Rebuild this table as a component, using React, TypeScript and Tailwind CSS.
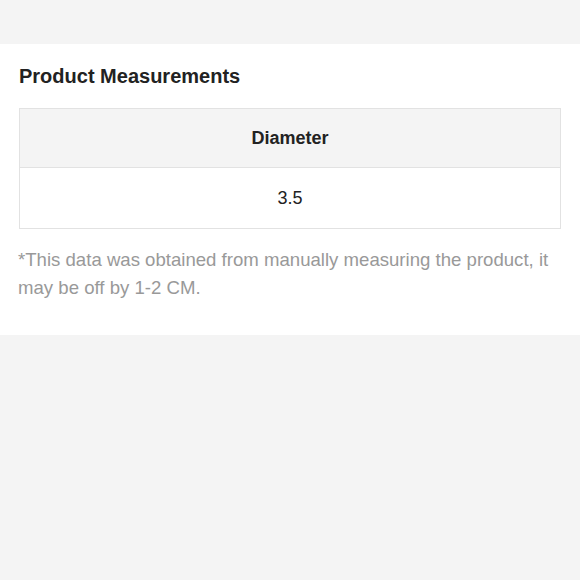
export default function App() {
  return (
    <div className="min-h-[580px] bg-[#f4f4f4] pt-[44px] font-['Liberation_Sans',Arial,sans-serif]">
      <section className="bg-white px-[19px] pt-[21px] pb-[33px]">
        <h2 className="text-[20px] leading-[22px] font-bold text-[#222]">Product Measurements</h2>
        <table className="mt-[21px] w-full border-collapse border border-[#e2e2e2] text-center">
          <thead>
            <tr className="bg-[#f4f4f4]">
              <th className="h-[59px] border border-[#e2e2e2] text-[18px] font-bold text-[#222]">Diameter</th>
            </tr>
          </thead>
          <tbody>
            <tr>
              <td className="h-[61px] border border-[#e2e2e2] text-[18px] text-[#222]">3.5</td>
            </tr>
          </tbody>
        </table>
        <p className="-ml-px mt-[17px] text-[18.6px] leading-[28px] text-[#999]">
          *This data was obtained from manually measuring the product, it may be off by 1-2 CM.
        </p>
      </section>
    </div>
  );
}
